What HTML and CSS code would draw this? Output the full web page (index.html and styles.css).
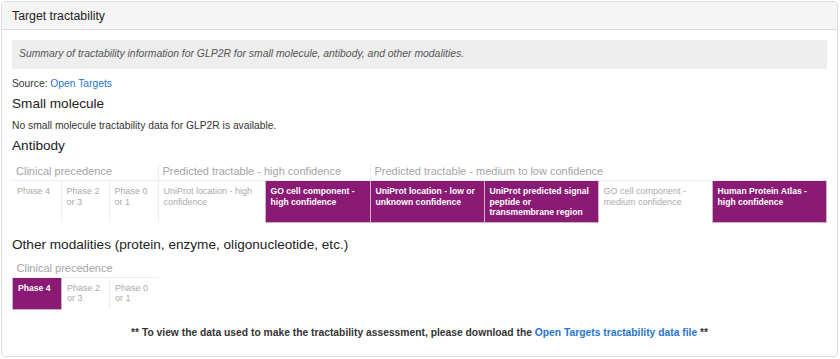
FILE: index.html
```
<!DOCTYPE html>
<html lang="en">
<head>
    <meta charset="UTF-8">
    <title>Target tractability</title>
    <link rel="stylesheet" href="styles.css">
</head>
<body>
    <div class="panel">
        <div class="panel-heading">Target tractability</div>
        <div class="panel-body">
            <div class="summary">Summary of tractability information for GLP2R for small molecule, antibody, and other modalities.</div>
            <p class="source">Source: <a href="#">Open Targets</a></p>

            <h4 class="section-title">Small molecule</h4>
            <p class="note">No small molecule tractability data for GLP2R is available.</p>

            <h4 class="section-title">Antibody</h4>
            <table class="tract-table antibody">
                <colgroup>
                    <col style="width:49px"><col style="width:48px"><col style="width:49px">
                    <col style="width:107px"><col style="width:105px">
                    <col style="width:114px"><col style="width:114px"><col style="width:114px"><col style="width:114px">
                </colgroup>
                <thead>
                    <tr>
                        <th colspan="3">Clinical precedence</th>
                        <th colspan="2">Predicted tractable - high confidence</th>
                        <th colspan="4">Predicted tractable - medium to low confidence</th>
                    </tr>
                </thead>
                <tbody>
                    <tr>
                        <td class="first">Phase 4</td>
                        <td>Phase 2 or 3</td>
                        <td>Phase 0 or 1</td>
                        <td>UniProt location - high confidence</td>
                        <td class="on">GO cell component - high confidence</td>
                        <td class="on">UniProt location - low or unknown confidence</td>
                        <td class="on">UniProt predicted signal peptide or transmembrane region</td>
                        <td>GO cell component - medium confidence</td>
                        <td class="on">Human Protein Atlas - high confidence</td>
                    </tr>
                </tbody>
            </table>

            <h4 class="section-title other">Other modalities (protein, enzyme, oligonucleotide, etc.)</h4>
            <table class="tract-table modalities">
                <colgroup>
                    <col style="width:49px"><col style="width:48px"><col style="width:49px">
                </colgroup>
                <thead>
                    <tr>
                        <th colspan="3">Clinical precedence</th>
                    </tr>
                </thead>
                <tbody>
                    <tr>
                        <td class="first on">Phase 4</td>
                        <td>Phase 2 or 3</td>
                        <td>Phase 0 or 1</td>
                    </tr>
                </tbody>
            </table>

            <p class="footer-note">** To view the data used to make the tractability assessment, please download the <a href="#">Open Targets tractability data file</a> **</p>
        </div>
    </div>
</body>
</html>
```
FILE: styles.css
```
* {
    box-sizing: border-box;
}

body {
    margin: 1px;
    font-family: "Liberation Sans", Arial, sans-serif;
    color: #333;
    background: #fff;
}

a {
    color: #2a76cc;
    text-decoration: none;
}

.panel {
    width: 837px;
    height: 356px;
    border: 1px solid #ddd;
    border-radius: 4px;
}

.panel-heading {
    height: 28px;
    padding: 7px 10px 0;
    font-size: 12.3px;
    background: #f5f5f5;
    border-bottom: 1px solid #ddd;
    border-radius: 3px 3px 0 0;
    color: #222;
}

.panel-body {
    padding: 10px 10px 0;
}

.summary {
    height: 29px;
    padding: 8px 7px 0;
    background: #eee;
    font-size: 10.4px;
    font-style: italic;
    color: #555;
}

.source,
.note {
    margin: 0;
    font-size: 10.3px;
}

.source {
    margin-top: 9px;
}

.section-title {
    margin: 7px 0 4px;
    font-size: 13.6px;
    font-weight: normal;
    color: #222;
}

.note {
    margin-top: 9px;
}

.tract-table {
    border-collapse: collapse;
    table-layout: fixed;
    margin-top: 11px;
}

.tract-table th {
    padding: 1px 4px 3px;
    font-size: 11px;
    font-weight: normal;
    color: #a4a4a4;
    text-align: left;
    border-left: 1px solid #eee;
    border-bottom: 1px solid #eee;
    white-space: nowrap;
}

.tract-table th:first-child {
    border-left: none;
}

.tract-table td {
    height: 41px;
    padding: 5px 5px 4px;
    vertical-align: top;
    font-size: 9px;
    line-height: 10.5px;
    color: #aaa;
    border-left: 1px solid #eee;
}

.tract-table td.first {
    border-left: none;
}

.tract-table td.on {
    background: #8a1a74;
    color: #fff;
    font-size: 8.6px;
    font-weight: bold;
    border: 1px solid #c9b3c4;
}

.modalities {
    margin-top: 9px;
}

.modalities td {
    height: 32px;
}

.section-title.other {
    margin-top: 14px;
}

.footer-note {
    margin: 17px 0 0;
    text-align: center;
    font-size: 10.3px;
    font-weight: bold;
    color: #333;
}
```
